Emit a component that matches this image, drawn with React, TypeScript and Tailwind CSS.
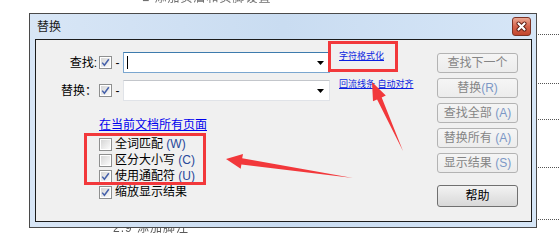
import React from "react";

function Check({ checked }: { checked?: boolean }) {
    return (
        <div className="w-[13px] h-[13px] shrink-0 border border-[#8e8f8f] bg-white p-px">
            <div className="w-full h-full bg-gradient-to-br from-[#d6d6d6] to-[#fbfbfb] flex items-center justify-center">
                {checked && (
                    <svg width="9" height="9" viewBox="0 0 9 9">
                        <path d="M1.2 4.6 L3.4 7.3 L7.8 1.2" fill="none" stroke="#4560aa" strokeWidth="1.5" />
                    </svg>
                )}
            </div>
        </div>
    );
}

function Btn({ label, hot, help }: { label: string; hot?: string; help?: boolean }) {
    if (help) {
        return (
            <div className="w-[81px] h-[22px] rounded-[3px] border border-[#707070] bg-gradient-to-b from-[#f3f3f3] to-[#d8d8d8] flex items-center justify-center text-[12px] text-black">
                {label}
            </div>
        );
    }
    return (
        <div className="w-[81px] h-[20px] rounded-[3px] border border-[#b3b3b3] bg-gradient-to-b from-[#f5f5f5] to-[#ececec] flex items-center justify-center text-[12px] text-[#858585]">
            <span className="whitespace-pre">
                {label}
                {hot && <span className="text-[#7c98c6]">{hot}</span>}
            </span>
        </div>
    );
}

function Option({ label, hot, checked }: { label: string; hot?: string; checked?: boolean }) {
    return (
        <div className="h-[16px] flex items-center">
            <Check checked={checked} />
            <span className="ml-[3px] text-[12px] leading-[16px] text-black">
                {label}
                {hot && <span className="text-[#27479a]"> {hot}</span>}
            </span>
        </div>
    );
}

function Combo({ focused }: { focused?: boolean }) {
    return (
        <div
            className={
                focused
                    ? "w-[207px] h-[21px] bg-white border border-[#7aa6cf] border-t-[#3d7bad] flex items-center justify-between pl-[3px] pr-[5px]"
                    : "w-[207px] h-[21px] bg-white border border-[#e0e3e8] border-t-[#c3c6cb] flex items-center justify-end pr-[5px]"
            }
        >
            {focused && <div className="w-px h-[13px] bg-black" />}
            <svg width="7" height="4" viewBox="0 0 7 4">
                <polygon points="0,0 7,0 3.5,4" fill="#000" />
            </svg>
        </div>
    );
}

export default function App() {
    return (
        <div className="relative w-[559px] h-[243px] overflow-hidden bg-white font-['Liberation_Sans','Noto_Sans_CJK_SC',sans-serif]">
            {/* document text behind the dialog */}
            <div className="h-[13px] overflow-hidden pl-[142px]">
                <div className="-mt-[8px] text-[12px] leading-[12px] text-[#6f6f6f] blur-[0.7px] tracking-[1px]">
                    ■ 添加页眉和页脚设置
                </div>
            </div>

            <div className="flex">
                <div className="w-[29px] shrink-0" />

                <div className="w-[508px] h-[215px] shrink-0 border border-[#4a4a4a] bg-gradient-to-r from-[#d8e6f6] via-[#c9dcf1] to-[#d6e6f7] flex flex-col pl-[5px] pr-[4px] pb-[5px]">
                    <div className="h-[25px] flex items-center justify-between">
                        <span className="pl-[2px] text-[12px] text-[#1b1b1b]">替换</span>
                        <div className="mr-px w-[19px] h-[19px] rounded-[3px] border border-[#7d3325] bg-gradient-to-b from-[#eaa894] via-[#d4634b] to-[#c2462d] flex items-center justify-center">
                            <svg width="11" height="11" viewBox="0 0 11 11">
                                <path d="M2.5 2.5 L8.5 8.5 M8.5 2.5 L2.5 8.5" stroke="#5b1c12" strokeWidth="4" strokeLinecap="round" />
                                <path d="M2.5 2.5 L8.5 8.5 M8.5 2.5 L2.5 8.5" stroke="#ffffff" strokeWidth="2.2" strokeLinecap="round" />
                            </svg>
                        </div>
                    </div>

                    <div className="flex-1 border border-[#1c1c1c] bg-[#f0f0f0] flex">
                        <div className="flex-1 pt-[12px]">
                            <div className="h-[21px] flex items-center">
                                <span className="w-[61px] text-right text-[12px] text-black">查找:</span>
                                <div className="ml-[2px]">
                                    <Check checked />
                                </div>
                                <span className="w-[11px] text-center text-[12px] text-black">-</span>
                                <Combo focused />
                                <a className="ml-[9px] self-start -mt-px text-[9px] leading-[11px] text-[#0b1fe0] underline">字符格式化</a>
                            </div>
                            <div className="mt-[7px] h-[21px] flex items-center">
                                <span className="w-[61px] text-right text-[12px] text-black">替换：</span>
                                <div className="ml-[2px]">
                                    <Check checked />
                                </div>
                                <span className="w-[11px] text-center text-[12px] text-black">-</span>
                                <Combo />
                                <a className="ml-[9px] self-start -mt-px text-[9px] leading-[11px] text-[#0b1fe0] underline whitespace-nowrap">回流线条 自动对齐</a>
                            </div>

                            <div className="ml-[63px] mt-[17px] text-[12px] leading-[14px]">
                                <a className="text-[#0000ee] underline">在当前文档所有页面</a>
                            </div>

                            <div className="ml-[63px] mt-[4px] flex flex-col">
                                <Option label="全词匹配" hot="(W)" />
                                <Option label="区分大小写" hot="(C)" />
                                <Option label="使用通配符" hot="(U)" checked />
                                <Option label="缩放显示结果" checked />
                            </div>
                        </div>

                        <div className="w-[81px] mr-[13px] pt-[13px] flex flex-col gap-[5px]">
                            <Btn label="查找下一个" />
                            <Btn label="替换" hot="(R)" />
                            <Btn label="查找全部 " hot="(A)" />
                            <Btn label="替换所有 " hot="(A)" />
                            <Btn label="显示结果 " hot="(S)" />
                            <div className="mt-[7px]">
                                <Btn label="帮助" help />
                            </div>
                        </div>
                    </div>
                </div>

                {/* dotted lines of the page behind */}
                <div className="flex-1 flex flex-col pl-px">
                    <div className="mt-[21px] border-t border-dotted border-[#555]" />
                    <div className="mt-[48px] border-t border-dotted border-[#555]" />
                    <div className="mt-[35px] border-t border-dotted border-[#555]" />
                    <div className="mt-[47px] border-t border-dotted border-[#555]" />
                    <div className="mt-[51px] border-t border-dotted border-[#555]" />
                </div>
            </div>

            <div className="h-[7px] overflow-hidden pl-[113px]">
                <div className="-mt-[6px] text-[12px] leading-[12px] text-[#5a5a5a] blur-[0.7px] tracking-[1px]">
                    2.9 添加脚注
                </div>
            </div>

            {/* annotations */}
            <svg className="absolute inset-0 pointer-events-none" width="559" height="243" viewBox="0 0 559 243">
                <rect x="329.5" y="42.5" width="67" height="28" fill="none" stroke="#f2383b" strokeWidth="3" />
                <rect x="85.5" y="134.5" width="119" height="49" fill="none" stroke="#f2383b" strokeWidth="3" />
                <polygon points="226,159 243,154 242.2,158.3 353,178 241.4,164.5 240.7,168.8" fill="#f2383b" />
                <polygon points="372,82 385.8,95.5 381.7,97.4 403,151 377.1,99.4 373,101.3" fill="#f2383b" />
            </svg>
        </div>
    );
}
